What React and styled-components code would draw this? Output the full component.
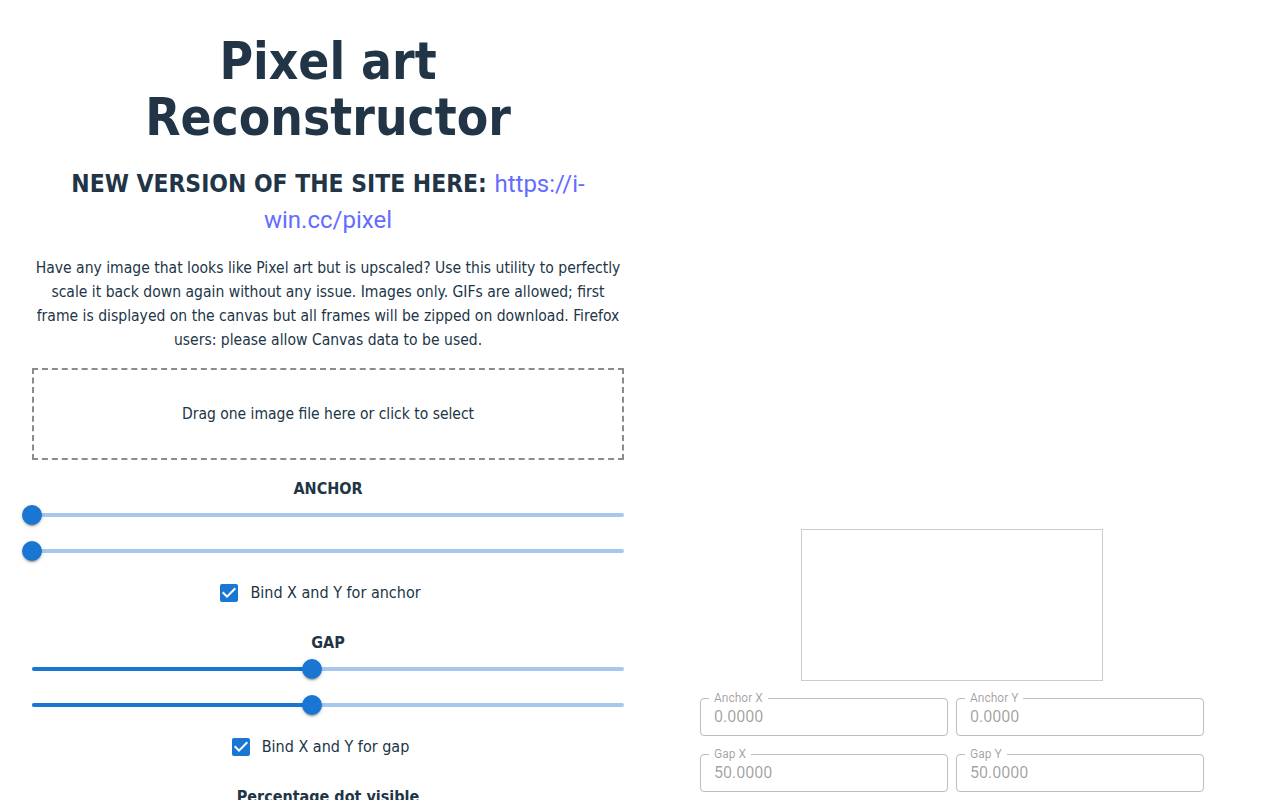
import React from "react";
import styled, { createGlobalStyle } from "styled-components";

const Global = createGlobalStyle`
  html, body { margin: 0; padding: 0; background: #ffffff; }
  body {
    font-family: "DejaVu Sans Condensed", "DejaVu Sans", sans-serif;
    font-stretch: condensed;
    color: #213547;
  }
`;

const Page = styled.main`
  display: grid;
  grid-template-columns: 1fr 1fr;
  column-gap: 32px;
  padding: 0 32px;
  align-items: start;
`;

const LeftColumn = styled.section`
  display: flex;
  flex-direction: column;
  text-align: center;
`;

const Title = styled.h1`
  font-size: 51px;
  line-height: 56.3px;
  font-weight: 700;
  margin: 34px 0 0;
`;

const Subtitle = styled.h2`
  font-size: 24.4px;
  line-height: 36px;
  font-weight: 700;
  margin: 19px 0 18px;
`;

const SiteLink = styled.a`
  font-family: Roboto, "Liberation Sans", sans-serif;
  font-stretch: normal;
  font-weight: 400;
  font-size: 24px;
  color: #646cff;
  text-decoration: none;
`;

const Intro = styled.p`
  font-size: 15.55px;
  line-height: 24px;
  margin: 0;
`;

const DropZone = styled.div`
  margin-top: 16px;
  height: 92px;
  box-sizing: border-box;
  border: 2px dashed #8c8c8c;
  display: flex;
  align-items: center;
  justify-content: center;
  font-size: 15.5px;
  cursor: pointer;
`;

const Section = styled.div`
  margin-top: 16px;
  display: flex;
  flex-direction: column;
`;

const SectionTitle = styled.h3`
  margin: 0;
  font-size: 16px;
  line-height: 24px;
  font-weight: 700;
  padding-top: 1px;
  margin-bottom: -1px;
`;

const SliderRoot = styled.div`
  position: relative;
  padding: 13px 0;
  margin-bottom: 6px;
`;

const Rail = styled.div`
  height: 4px;
  border-radius: 2px;
  background: #a7c8ee;
`;

const Track = styled.div`
  position: absolute;
  left: 0;
  top: 13px;
  height: 4px;
  border-radius: 2px;
  background: #1976d2;
`;

const Thumb = styled.div`
  position: absolute;
  top: 15px;
  width: 20px;
  height: 20px;
  border-radius: 50%;
  background: #1976d2;
  transform: translate(-50%, -50%);
  box-shadow: 0px 3px 1px -2px rgba(0, 0, 0, 0.2),
    0px 2px 2px 0px rgba(0, 0, 0, 0.14), 0px 1px 5px 0px rgba(0, 0, 0, 0.12);
`;

const CheckRow = styled.div`
  display: flex;
  justify-content: center;
`;

const CheckLabel = styled.label`
  display: inline-flex;
  align-items: center;
  height: 42px;
  margin: 0 16px 0 -11px;
  font-size: 16px;
  cursor: pointer;
`;

const CheckBox = styled.span`
  display: inline-flex;
  padding: 9px;
  color: #1976d2;
  svg { width: 24px; height: 24px; fill: currentColor; display: block; }
`;

const RightColumn = styled.section`
  padding-top: 529px;
  display: flex;
  flex-direction: column;
  align-items: center;
`;

const Preview = styled.canvas`
  display: block;
  width: 300px;
  height: 150px;
  border: 1px solid #cccccc;
`;

const FieldGrid = styled.div`
  margin-top: 11px;
  width: 504px;
  display: grid;
  grid-template-columns: 1fr 1fr;
  column-gap: 8px;
  row-gap: 12px;
`;

const Field = styled.fieldset`
  margin: 0;
  min-width: 0;
  padding: 0 13px;
  border: 1px solid rgba(0, 0, 0, 0.26);
  border-radius: 4px;
  font-family: Roboto, "Liberation Sans", sans-serif;
  font-stretch: normal;
`;

const FieldLabel = styled.legend`
  font-size: 12px;
  line-height: 12px;
  padding: 0 5px;
  margin-left: -5px;
  color: rgba(0, 0, 0, 0.38);
`;

const FieldInput = styled.input`
  display: block;
  width: 100%;
  box-sizing: border-box;
  height: 31px;
  padding: 0 0 7px;
  border: 0;
  outline: none;
  background: transparent;
  font-family: Roboto, "Liberation Sans", sans-serif;
  font-stretch: normal;
  font-size: 16px;
  line-height: 24px;
  color: rgba(0, 0, 0, 0.38);
`;

function Slider({ value }) {
  return (
    <SliderRoot>
      <Rail />
      <Track style={{ width: `${value}%` }} />
      <Thumb style={{ left: `${value}%` }} />
    </SliderRoot>
  );
}

function Check({ label }) {
  return (
    <CheckRow>
      <CheckLabel>
        <CheckBox>
          <svg viewBox="0 0 24 24" aria-hidden="true">
            <path d="M19 3H5c-1.11 0-2 .9-2 2v14c0 1.1.89 2 2 2h14c1.11 0 2-.9 2-2V5c0-1.1-.89-2-2-2zm-9 14l-5-5 1.41-1.41L10 14.17l7.59-7.59L19 8l-9 9z" />
          </svg>
        </CheckBox>
        {label}
      </CheckLabel>
    </CheckRow>
  );
}

function TextField({ label, value }) {
  return (
    <Field>
      <FieldLabel>{label}</FieldLabel>
      <FieldInput readOnly value={value} />
    </Field>
  );
}

export default function App() {
  return (
    <>
      <Global />
      <Page>
        <LeftColumn>
          <Title>Pixel art Reconstructor</Title>
          <Subtitle>
            NEW VERSION OF THE SITE HERE:{" "}
            <SiteLink href="#">https://i-win.cc/pixel</SiteLink>
          </Subtitle>
          <Intro>
            Have any image that looks like Pixel art but is upscaled? Use this
            utility to perfectly scale it back down again without any issue.
            Images only. GIFs are allowed; first frame is displayed on the
            canvas but all frames will be zipped on download. Firefox users:
            please allow Canvas data to be used.
          </Intro>
          <DropZone>Drag one image file here or click to select</DropZone>
          <Section>
            <SectionTitle>ANCHOR</SectionTitle>
            <Slider value={0} />
            <Slider value={0} />
            <Check label="Bind X and Y for anchor" />
          </Section>
          <Section>
            <SectionTitle>GAP</SectionTitle>
            <Slider value={47.3} />
            <Slider value={47.3} />
            <Check label="Bind X and Y for gap" />
          </Section>
          <Section>
            <SectionTitle>Percentage dot visible</SectionTitle>
          </Section>
        </LeftColumn>
        <RightColumn>
          <Preview width={300} height={150} />
          <FieldGrid>
            <TextField label="Anchor X" value="0.0000" />
            <TextField label="Anchor Y" value="0.0000" />
            <TextField label="Gap X" value="50.0000" />
            <TextField label="Gap Y" value="50.0000" />
          </FieldGrid>
        </RightColumn>
      </Page>
    </>
  );
}
